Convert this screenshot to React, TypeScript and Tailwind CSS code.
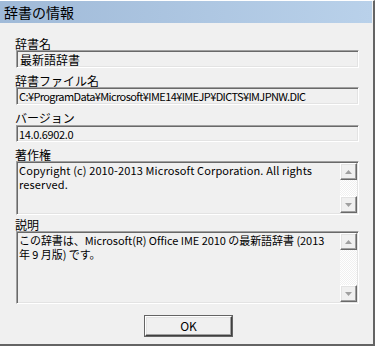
import React from 'react'

const font = { fontFamily: '"Noto Sans CJK JP", sans-serif' }

function Sunken({ className, children }: { className?: string; children?: React.ReactNode }) {
  return (
    <div
      className={
        'relative border border-t-[#a0a0a0] border-l-[#a0a0a0] border-b-white border-r-white shadow-[inset_1px_1px_0_#696969,inset_-1px_-1px_0_#e3e3e3] bg-[#f0f0f0] ' +
        (className ?? '')
      }
    >
      {children}
    </div>
  )
}

function ScrollButton({ up }: { up?: boolean }) {
  return (
    <div className="w-[17px] h-[17px] bg-[#f0f0f0] border border-t-white border-l-white border-b-[#696969] border-r-[#696969] shadow-[inset_-1px_-1px_0_#a0a0a0,inset_1px_1px_0_#e3e3e3] flex items-center justify-center">
      <svg width="7" height="4" viewBox="0 0 7 4">
        {up ? <polygon points="3.5,0 7,4 0,4" fill="#a0a0a0" /> : <polygon points="0,0 7,0 3.5,4" fill="#a0a0a0" />}
      </svg>
    </div>
  )
}

function ScrollBar() {
  return (
    <div className="absolute right-[1px] top-[1px] bottom-[1px] w-[17px] flex flex-col justify-between bg-[repeating-conic-gradient(#f0f0f0_0_25%,#ffffff_0_50%)] bg-[length:2px_2px]">
      <ScrollButton up />
      <ScrollButton />
    </div>
  )
}

function Label({ children }: { children: React.ReactNode }) {
  return <div className="text-[12px] leading-[13px] h-[13px] mb-[-1px]">{children}</div>
}

export default function App() {
  return (
    <div
      className="w-[375px] h-[346px] bg-[#f0f0f0] border-t border-t-white border-r-2 border-r-[#646464] border-b-2 border-b-[#646464] text-black flex flex-col"
      style={font}
    >
      <div className="h-[22px] shrink-0 bg-gradient-to-r from-[#a0bad8] to-[#b9d1ea] mr-[1px] pl-[4px] flex items-center text-[14px] leading-none text-black">
        辞書の情報
      </div>
      <div className="flex flex-col pl-[15px] pr-[14px] pt-[14px]">
        <Label>辞書名</Label>
        <Sunken className="h-[18px] ml-[1px] mt-[1px]">
          <div className="pl-[3px] pt-[2px] text-[12px] leading-[13px]">最新語辞書</div>
        </Sunken>
        <div className="h-[6px]" />
        <Label>辞書ファイル名</Label>
        <Sunken className="h-[18px] ml-[1px] mt-[1px]">
          <div className="pl-[2px] pt-[2px] text-[11px] leading-[13px] tracking-[-0.6px] whitespace-nowrap">
            C:¥ProgramData¥Microsoft¥IME14¥IMEJP¥DICTS¥IMJPNW.DIC
          </div>
        </Sunken>
        <div className="h-[6px]" />
        <Label>バージョン</Label>
        <Sunken className="h-[17px] ml-[1px] mt-[2px]">
          <div className="pl-[2px] pt-[2px] text-[11px] leading-[13px] tracking-[-0.35px]">14.0.6902.0</div>
        </Sunken>
        <div className="h-[6px]" />
        <Label>著作権</Label>
        <Sunken className="h-[54px] ml-[1px] mt-[1px]">
          <div className="pl-[2px] pt-[1px] text-[11px] leading-[14px] tracking-[0.12px] whitespace-nowrap">
            <div>Copyright (c) 2010-2013 Microsoft Corporation. All rights</div>
            <div>reserved.</div>
          </div>
          <ScrollBar />
        </Sunken>
        <div className="h-[3px]" />
        <Label>説明</Label>
        <Sunken className="h-[73px] ml-[1px] mt-[1px]">
          <div className="pl-[2px] pt-[1px] text-[11px] leading-[14px] tracking-[-0.05px] whitespace-nowrap">
            <div>この辞書は、Microsoft(R) Office IME 2010 の最新語辞書 (2013</div>
            <div>年 9 月版) です。</div>
          </div>
          <ScrollBar />
        </Sunken>
        <div className="flex justify-center pt-[12px] pl-[3px]">
          <div className="w-[87px] h-[20px] border border-t-white border-l-white border-b-[#404040] border-r-[#404040] shadow-[inset_-1px_-1px_0_#a0a0a0,inset_1px_1px_0_#e3e3e3] bg-[#f0f0f0] flex items-center justify-center text-[12px] leading-none outline outline-1 outline-[#646464]">
            OK
          </div>
        </div>
      </div>
    </div>
  )
}
